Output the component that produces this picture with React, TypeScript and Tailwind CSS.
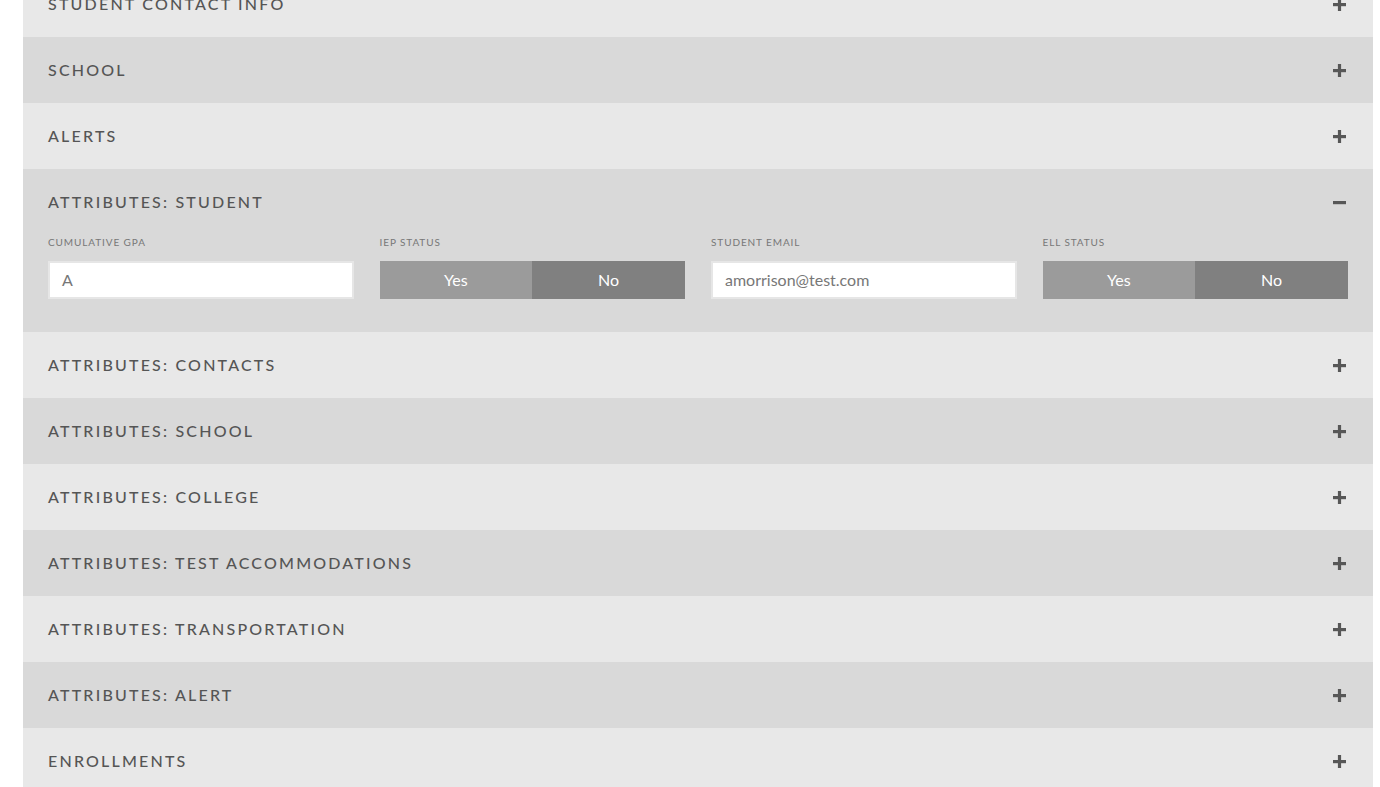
import React, { useState } from 'react';

const sections = [
	'STUDENT CONTACT INFO',
	'SCHOOL',
	'ALERTS',
	'ATTRIBUTES: STUDENT',
	'ATTRIBUTES: CONTACTS',
	'ATTRIBUTES: SCHOOL',
	'ATTRIBUTES: COLLEGE',
	'ATTRIBUTES: TEST ACCOMMODATIONS',
	'ATTRIBUTES: TRANSPORTATION',
	'ATTRIBUTES: ALERT',
	'ENROLLMENTS',
];

function PlusIcon() {
	return (
		<svg width="13" height="13" viewBox="0 0 13 13" className="block">
			<rect x="0" y="5" width="13" height="3.2" fill="#575757" />
			<rect x="4.9" y="0" width="3.2" height="13" fill="#575757" />
		</svg>
	);
}

function MinusIcon() {
	return (
		<svg width="13" height="13" viewBox="0 0 13 13" className="block">
			<rect x="0" y="5" width="13" height="3.2" fill="#575757" />
		</svg>
	);
}

function Label({ children }: { children: React.ReactNode }) {
	return (
		<div className="h-[12px] leading-[12px] mt-[1px] text-[10px] tracking-[0.9px] text-[#777] uppercase mb-[13px]">
			{children}
		</div>
	);
}

function TextField({ label, value }: { label: string; value: string }) {
	return (
		<div>
			<Label>{label}</Label>
			<div className="h-[38px] bg-white border-2 border-[#e6e6e6] flex items-center px-[12px] text-[16px] text-[#777]">
				{value}
			</div>
		</div>
	);
}

function Toggle({ label }: { label: string }) {
	const [val, setVal] = useState<'yes' | 'no' | null>(null);
	return (
		<div>
			<Label>{label}</Label>
			<div className="h-[38px] flex text-white text-[16px]">
				<button onClick={() => setVal('yes')} className="flex-1 bg-[#9b9b9b] flex items-center justify-center">
					Yes
				</button>
				<button onClick={() => setVal('no')} className="flex-1 bg-[#808080] flex items-center justify-center">
					No
				</button>
			</div>
		</div>
	);
}

export default function App() {
	const [open, setOpen] = useState('ATTRIBUTES: STUDENT');

	return (
		<div className="bg-white h-screen overflow-hidden" style={{ fontFamily: 'Lato, "Open Sans", sans-serif' }}>
			<div className="ml-[23px] mr-[7px] -mt-[29px]">
				{sections.map((title, i) => {
					const isOpen = open === title;
					return (
						<div key={title} className={i % 2 === 0 ? 'bg-[#e8e8e8]' : 'bg-[#d9d9d9]'}>
							<button
								onClick={() => setOpen(isOpen ? '' : title)}
								className="w-full h-[66px] flex items-center justify-between pl-[25px] pr-[27px] text-left"
							>
								<span className="text-[16px] tracking-[2.2px] text-[#555] font-medium">{title}</span>
								{isOpen ? <MinusIcon /> : <PlusIcon />}
							</button>
							{isOpen && (
								<div className="grid grid-cols-4 gap-[26px] px-[25px] pb-[33px]">
									<TextField label="Cumulative GPA" value="A" />
									<Toggle label="IEP Status" />
									<TextField label="Student Email" value="amorrison@test.com" />
									<Toggle label="ELL Status" />
								</div>
							)}
						</div>
					);
				})}
			</div>
		</div>
	);
}
